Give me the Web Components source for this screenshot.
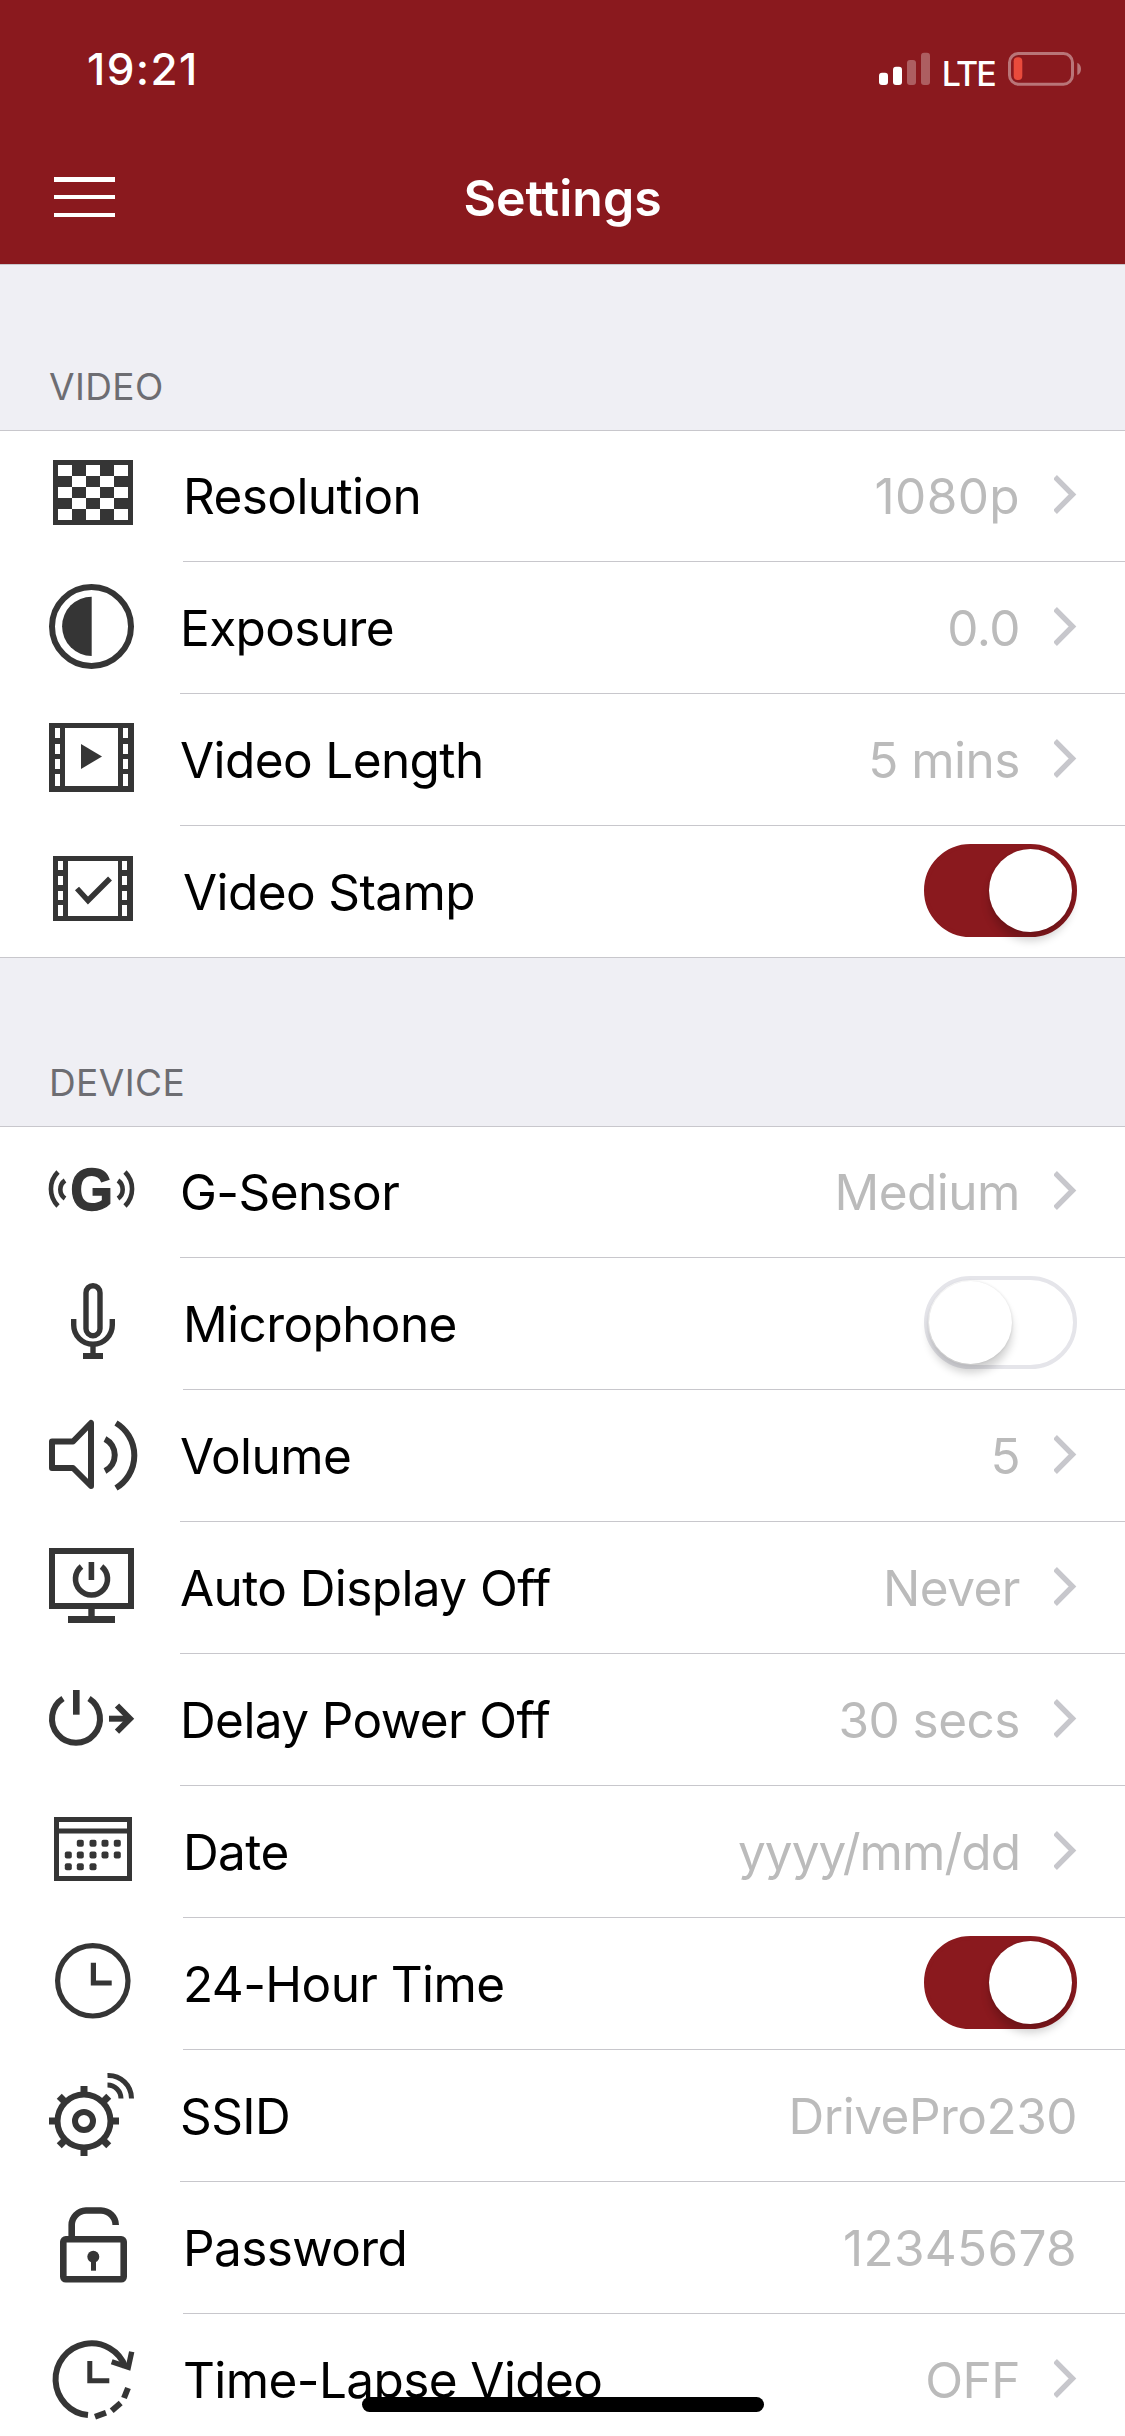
<!DOCTYPE html>
<html lang="en">
<head>
<meta charset="utf-8">
<title>Settings</title>
<style>
    html, body { margin: 0; height: 2436px; overflow: hidden; background: #fff; }
    body { font-family: Inter, "Liberation Sans", sans-serif; }
</style>
</head>
<body>
<settings-app>
    <status-bar time="19:21" network="LTE"></status-bar>
    <nav-bar>Settings</nav-bar>

    <section-header space="165">VIDEO</section-header>
    <settings-row icon="resolution" indent="183">Resolution<row-value slot="trailing" chevron tracking="0.4">1080p</row-value></settings-row>
    <settings-row icon="exposure" indent="180">Exposure<row-value slot="trailing" chevron>0.0</row-value></settings-row>
    <settings-row icon="length" indent="180">Video Length<row-value slot="trailing" chevron>5 mins</row-value></settings-row>
    <settings-row icon="stamp" indent="183">Video Stamp<toggle-switch slot="trailing" on></toggle-switch></settings-row>

    <section-header space="168">DEVICE</section-header>
    <settings-row icon="gsensor" indent="180">G-Sensor<row-value slot="trailing" chevron>Medium</row-value></settings-row>
    <settings-row icon="mic" indent="183">Microphone<toggle-switch slot="trailing"></toggle-switch></settings-row>
    <settings-row icon="volume" indent="180">Volume<row-value slot="trailing" chevron>5</row-value></settings-row>
    <settings-row icon="display" indent="180">Auto Display Off<row-value slot="trailing" chevron>Never</row-value></settings-row>
    <settings-row icon="delay" indent="180">Delay Power Off<row-value slot="trailing" chevron>30 secs</row-value></settings-row>
    <settings-row icon="date" indent="183">Date<row-value slot="trailing" chevron tracking="-0.95">yyyy/mm/dd</row-value></settings-row>
    <settings-row icon="clock" indent="183">24-Hour Time<toggle-switch slot="trailing" on></toggle-switch></settings-row>
    <settings-row icon="ssid" indent="180">SSID<row-value slot="trailing">DrivePro230</row-value></settings-row>
    <settings-row icon="lock" indent="183">Password<row-value slot="trailing" tracking="0.3">12345678</row-value></settings-row>
    <settings-row icon="timelapse" indent="183">Time-Lapse Video<row-value slot="trailing" chevron>OFF</row-value></settings-row>
</settings-app>

<script>
const checker = () => {
    let out = '';
    for (let r = 0; r < 5; r++) {
        for (let c = 0; c < 5; c++) {
            if ((r + c) % 2) out += `<rect x="${58 + c * 14}" y="${35 + r * 11}" width="14" height="11"/>`;
        }
    }
    return out;
};

const calendarDots = () => {
    const xs = [68.3, 80.3, 93, 105, 117.3];
    const rows = [[57.3, 1, 5], [69, 0, 5], [80.7, 0, 3]];
    let out = '';
    rows.forEach(([y, from, to]) => {
        for (let i = from; i < to; i++) {
            out += `<rect x="${xs[i] - 3.5}" y="${y - 3.5}" width="7" height="7" rx="2"/>`;
        }
    });
    return out;
};

const gearTeeth = () => {
    let out = '';
    for (let i = 0; i < 8; i++) {
        out += `<rect x="80.5" y="36" width="7" height="10" transform="rotate(${i * 45} 84 71)"/>`;
    }
    return out;
};

const ICONS = {
    resolution: `<path fill-rule="evenodd" d="M53 30h80v65H53zM58 35v55h70V35z"/>${checker()}`,
    exposure: `<circle class="line" cx="91.5" cy="64.5" r="39.5" stroke-width="6"/>
        <path d="M91.7 34.7a29.6 29.6 0 0 0 0 59.2z"/>`,
    length: `<path fill-rule="evenodd" d="M49 29h85v69H49zM65 34v58h53V34zM55 34v10h5V34zM55 50v10h5V50zM55 65v10h5V65zM55 80v12h5V80zM123 34v10h5V34zM123 50v10h5V50zM123 65v10h5V65zM123 80v12h5V80z"/>
        <path d="M81 50l21 12.5L81 75z"/>`,
    stamp: `<path fill-rule="evenodd" d="M53 30h80v65H53zM68 35v55h50V35zM58 35v9h5v-9zM58 50v9h5v-9zM58 65v9h5v-9zM58 79v11h5V79zM122 35v9h5v-9zM122 50v9h5v-9zM122 65v9h5v-9zM122 79v11h5V79z"/>
        <path class="line" stroke-width="5.5" d="M77 62.5l11 12L110 52.5"/>`,
    gsensor: `<text transform="translate(91.5 84) scale(.92 1)" text-anchor="middle" font-family="'Liberation Sans', sans-serif" font-weight="700" font-size="60" stroke="#353535" stroke-width="1.4">G</text>
        <g class="line" stroke-width="4.6">
            <path d="M58 46A24 24 0 0 0 58 80"/><path d="M65 54.5A11 11 0 0 0 65 72.5"/>
            <path d="M125 46A24 24 0 0 1 125 80"/><path d="M118 54.5A11 11 0 0 1 118 72.5"/>
        </g>`,
    mic: `<g class="line" stroke-width="5.4">
            <rect x="86" y="27.7" width="14" height="50" rx="7"/>
            <path d="M73.7 61v6a19.3 19.3 0 0 0 38.6 0v-6"/>
            <path d="M93 86v11"/>
        </g>
        <rect x="83" y="95" width="20" height="6"/>`,
    volume: `<g class="line" stroke-width="6" stroke-linejoin="round">
            <path d="M52 51.5H73L91 33V96L73 78H52z"/>
            <path d="M105 49A18 18 0 0 1 105 81"/>
            <path d="M116 33A38 38 0 0 1 116 98"/>
        </g>`,
    display: `<g class="line" stroke-width="6">
            <rect x="52" y="29" width="79" height="55"/>
        </g>
        <rect x="88.3" y="87" width="6.4" height="8"/>
        <rect x="68" y="94" width="47" height="7"/>
        <g class="line" stroke-width="5.6">
            <path d="M81.5 44.5A16 16 0 1 0 101.5 44.5"/>
            <path d="M91.4 40V58"/>
        </g>`,
    delay: `<g class="line" stroke-width="6">
            <path d="M63 44.6A24 24 0 1 0 89 44.6"/>
            <path d="M76.3 36V60.7" stroke-width="6.6"/>
            <path d="M109 64.7H129"/>
            <path d="M117 51.5L130 64.7L117 77.7"/>
        </g>`,
    date: `<g class="line" stroke-width="5">
            <rect x="56.5" y="33.5" width="73" height="59"/>
            <path d="M56.5 45H129.5"/>
        </g>${calendarDots()}`,
    clock: `<g class="line" stroke-width="5.2">
            <circle cx="92.8" cy="62.8" r="35.2"/>
            <path d="M93.4 44.7V65H111.7"/>
        </g>`,
    ssid: `<g class="line" stroke-width="6">
            <circle cx="84" cy="71" r="26.5"/>
            <circle cx="84" cy="71" r="9"/>
        </g>${gearTeeth()}
        <g class="line" stroke-width="5">
            <path d="M107.5 25.5A23 23 0 0 1 131.5 48.5"/>
            <path d="M107.5 35A13.5 13.5 0 0 1 121 48.5"/>
        </g>`,
    lock: `<g class="line" stroke-width="6.6">
            <rect x="63.3" y="57.3" width="60.4" height="40" rx="2.5"/>
            <path d="M71.7 56V43A15 14.5 0 0 1 86 28.5H101A15 14.5 0 0 1 115.7 43"/>
        </g>
        <circle cx="93.3" cy="74.7" r="6"/>
        <rect x="91" y="74" width="5" height="14.7"/>`,
    timelapse: `<g class="line" stroke-width="6">
            <path d="M88 101.1A36 36 0 1 1 125.5 53.3"/>
            <path d="M111.7 47.7L128.3 53.3L131.7 37.7" stroke-width="5.4"/>
            <path d="M128 74L124 84"/>
            <path d="M120.7 89L111.7 96.7"/>
            <path d="M106 98.7L95 102.7"/>
        </g>
        <path class="line" stroke-width="5" d="M89.8 47V66.8H109.3"/>`
};

class SettingsApp extends HTMLElement {
    constructor() {
        super();
        this.attachShadow({ mode: 'open' });
        this.shadowRoot.innerHTML = `
            <style>
                :host {
                    display: flex;
                    flex-direction: column;
                    position: relative;
                    width: 1125px;
                    height: 2436px;
                    overflow: hidden;
                    background: #fff;
                }
                .home {
                    position: absolute;
                    left: 362px;
                    top: 2397px;
                    width: 402px;
                    height: 15px;
                    border-radius: 8px;
                    background: #000;
                }
            </style>
            <slot></slot>
            <div class="home"></div>
        `;
    }
}

class StatusBar extends HTMLElement {
    constructor() {
        super();
        this.attachShadow({ mode: 'open' });
    }

    connectedCallback() {
        this.shadowRoot.innerHTML = `
            <style>
                :host {
                    display: flex;
                    flex: none;
                    justify-content: space-between;
                    align-items: flex-start;
                    height: 132px;
                    padding: 44px 44px 0 87px;
                    box-sizing: border-box;
                    background: #8a191e;
                    color: #fff;
                }
                .time {
                    font-size: 44px;
                    font-weight: 500;
                    line-height: 50px;
                    letter-spacing: 1.4px;
                }
                .right {
                    display: flex;
                    align-items: flex-start;
                }
                .net {
                    font-size: 34px;
                    font-weight: 500;
                    line-height: 40px;
                    margin: 10px 13px 0 12px;
                    letter-spacing: -1.8px;
                }
                svg { display: block; }
            </style>
            <span class="time">${this.getAttribute('time')}</span>
            <div class="right">
                <svg width="51" height="34" viewBox="881 52 51 34" style="margin-top:8px">
                    <rect x="881" y="72.7" width="9" height="12.3" rx="3" fill="#fff"/>
                    <rect x="895" y="66.7" width="9" height="18.3" rx="3" fill="#fff"/>
                    <rect x="909" y="60" width="9" height="25" rx="3" fill="#fff" opacity=".3"/>
                    <rect x="923" y="52.7" width="9" height="32.3" rx="3" fill="#fff" opacity=".3"/>
                </svg>
                <span class="net">${this.getAttribute('network')}</span>
                <svg width="73" height="36" viewBox="1008 51 73 36" style="margin-top:7px">
                    <rect x="1009.5" y="53.5" width="63" height="30.7" rx="9" fill="none" stroke="#fff" stroke-opacity=".4" stroke-width="3"/>
                    <rect x="1013.7" y="57.3" width="8.6" height="22.7" rx="4" fill="#e94b3c"/>
                    <path d="M1077.3 62.7c2.4 1 3.7 3.4 3.7 6.2s-1.3 5.2-3.7 6.1z" fill="#fff" fill-opacity=".4"/>
                </svg>
            </div>
        `;
    }
}

class NavBar extends HTMLElement {
    constructor() {
        super();
        this.attachShadow({ mode: 'open' });
        this.shadowRoot.innerHTML = `
            <style>
                :host {
                    display: flex;
                    flex: none;
                    align-items: center;
                    justify-content: center;
                    position: relative;
                    height: 133px;
                    padding-bottom: 1px;
                    box-sizing: border-box;
                    border-bottom: 1px solid #c8c7cc;
                    background: #8a191e;
                    color: #fff;
                    font-size: 50px;
                    font-weight: 600;
                    letter-spacing: 0;
                }
                .menu {
                    position: absolute;
                    left: 54px;
                    top: 45px;
                    width: 61px;
                    height: 40px;
                    display: flex;
                    flex-direction: column;
                    justify-content: space-between;
                }
                .menu i {
                    display: block;
                    height: 4.5px;
                    background: #fff;
                }
            </style>
            <div class="menu"><i></i><i></i><i></i></div>
            <slot></slot>
        `;
    }
}

class SectionHeader extends HTMLElement {
    constructor() {
        super();
        this.attachShadow({ mode: 'open' });
    }

    connectedCallback() {
        this.shadowRoot.innerHTML = `
            <style>
                :host {
                    display: flex;
                    flex: none;
                    position: relative;
                    z-index: 1;
                    align-items: flex-end;
                    height: ${Number(this.getAttribute('space')) + 2}px;
                    margin: -1px 0;
                    padding: 0 0 21px 49px;
                    box-sizing: border-box;
                    border-top: 1px solid #c8c7cc;
                    border-bottom: 1px solid #c8c7cc;
                    background: #efeff4;
                    color: #6d6d72;
                    font-size: 37px;
                    line-height: 44px;
                    letter-spacing: 0.4px;
                }
            </style>
            <slot></slot>
        `;
    }
}

class SettingsRow extends HTMLElement {
    constructor() {
        super();
        this.attachShadow({ mode: 'open' });
    }

    connectedCallback() {
        const indent = this.getAttribute('indent') || 180;
        this.shadowRoot.innerHTML = `
            <style>
                :host {
                    display: flex;
                    flex: none;
                    height: 132px;
                    background: #fff;
                    color: #000;
                    font-size: 49.5px;
                    letter-spacing: -0.6px;
                }
                .icon {
                    flex: none;
                    width: ${indent}px;
                    height: 132px;
                }
                svg {
                    display: block;
                    overflow: visible;
                    fill: #353535;
                }
                .body {
                    flex: 1;
                    display: flex;
                    align-items: center;
                    justify-content: space-between;
                    box-sizing: border-box;
                    padding: 1px 48px 0 0;
                    border-bottom: 1px solid #c8c7cc;
                }
                .line {
                    fill: none;
                    stroke: #353535;
                }
                g.line * { fill: none; }
            </style>
            <div class="icon">
                <svg width="180" height="132" viewBox="0 0 180 132">${ICONS[this.getAttribute('icon')]}</svg>
            </div>
            <div class="body">
                <span><slot></slot></span>
                <slot name="trailing"></slot>
            </div>
        `;
    }
}

class RowValue extends HTMLElement {
    constructor() {
        super();
        this.attachShadow({ mode: 'open' });
    }

    connectedCallback() {
        const chevron = this.hasAttribute('chevron');
        const tracking = this.getAttribute('tracking') || -0.5;
        this.shadowRoot.innerHTML = `
            <style>
                :host {
                    display: flex;
                    align-items: center;
                    color: #bbbbbb;
                    letter-spacing: ${tracking}px;
                }
                svg {
                    display: block;
                    margin: -3px 0 0 34px;
                }
            </style>
            <slot></slot>
            ${chevron ? `<svg width="23" height="39" viewBox="0 0 23 39"><path d="M1 2l17.5 17.5L1 37" fill="none" stroke="#c7c7cc" stroke-width="5.4"/></svg>` : ''}
        `;
    }
}

class ToggleSwitch extends HTMLElement {
    constructor() {
        super();
        this.attachShadow({ mode: 'open' });
        this.shadowRoot.innerHTML = `
            <style>
                :host {
                    display: block;
                    position: relative;
                    width: 153px;
                    height: 93px;
                    margin-top: -3px;
                    box-sizing: border-box;
                    border-radius: 47px;
                    background: #fff;
                    border: 4px solid #e5e5ea;
                }
                :host([on]) {
                    background: #8a191e;
                    border-color: #8a191e;
                }
                .knob {
                    position: absolute;
                    left: 1px;
                    top: 1px;
                    width: 83px;
                    height: 83px;
                    border-radius: 50%;
                    background: #fff;
                    box-shadow: 0 9px 9px rgba(0, 0, 0, 0.18), 0 0 3px rgba(0, 0, 0, 0.12);
                }
                :host([on]) .knob {
                    left: auto;
                    right: 1px;
                }
            </style>
            <div class="knob"></div>
        `;
    }
}

customElements.define('settings-app', SettingsApp);
customElements.define('status-bar', StatusBar);
customElements.define('nav-bar', NavBar);
customElements.define('section-header', SectionHeader);
customElements.define('settings-row', SettingsRow);
customElements.define('row-value', RowValue);
customElements.define('toggle-switch', ToggleSwitch);
</script>
</body>
</html>
